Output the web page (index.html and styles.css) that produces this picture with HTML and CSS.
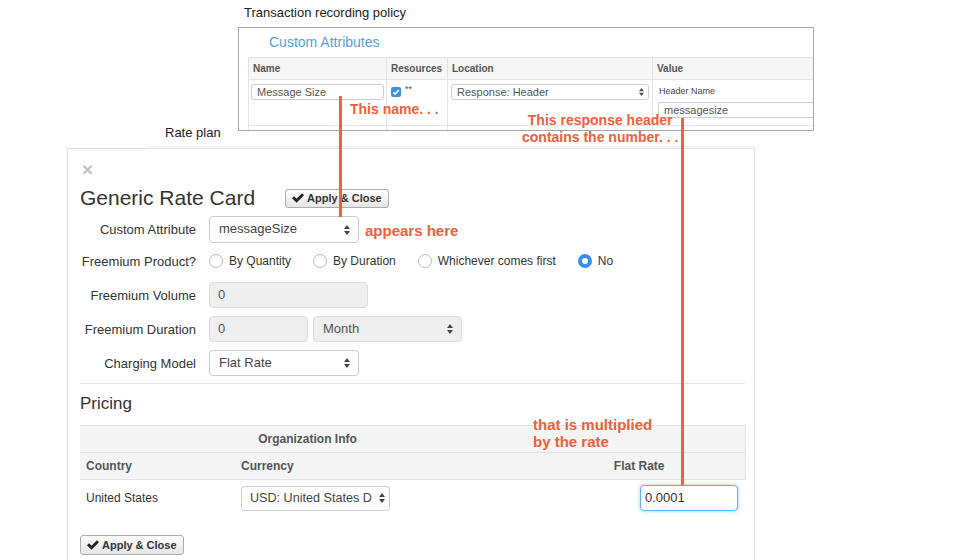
FILE: index.html
```html
<!DOCTYPE html>
<html lang="en">
<head>
<meta charset="utf-8">
<title>Generic Rate Card</title>
<link rel="stylesheet" href="styles.css">
</head>
<body>
<div class="canvas">
  <section class="policy">
    <h2 class="policy-title">Transaction recording policy</h2>
    <div class="attr-box">
      <h3 class="attr-title">Custom Attributes</h3>
      <table class="attr-table">
        <colgroup><col class="w-name"><col class="w-res"><col class="w-loc"><col class="w-val"></colgroup>
        <thead>
          <tr><th>Name</th><th>Resources</th><th>Location</th><th>Value</th></tr>
        </thead>
        <tbody>
          <tr>
            <td><div class="mini-input">Message Size</div></td>
            <td><span class="cbx"><svg width="10" height="10" viewBox="0 0 10 10"><path d="M2.3 5.2 L4.2 7.1 L7.8 3" fill="none" stroke="#fff" stroke-width="1.5"/></svg></span><span class="stars">**</span></td>
            <td><div class="mini-input sel">Response: Header<span class="arrows small"><svg width="5" height="8" viewBox="0 0 5 8"><path d="M0 3.3 L2.5 0 L5 3.3 Z M0 4.7 L2.5 8 L5 4.7 Z" fill="#555"/></svg></span></div></td>
            <td><div class="hdr-name">Header Name</div><div class="mini-input val">messagesize</div></td>
          </tr>
          <tr>
            <td><div class="mini-input"></div></td>
            <td></td>
            <td><div class="mini-input sel"></div></td>
            <td></td>
          </tr>
        </tbody>
      </table>
    </div>
  </section>

  <div class="rateplan">Rate plan</div>
  <div class="bg-strip"></div>

  <div class="modal">
    <div class="close">&times;</div>
    <div class="title-row">
      <h1 class="modal-title">Generic Rate Card</h1>
      <button class="btn"><svg class="chk" width="12" height="10" viewBox="0 0 12 10"><path d="M0 5.2 L2 3.2 L4.6 5.7 L10 0.3 L12 2.3 L4.6 9.7 Z" fill="#222"/></svg>Apply &amp; Close</button>
    </div>

    <div class="form">
      <div class="frow">
        <label class="flabel">Custom Attribute</label>
        <div class="select w150">messageSize<span class="arrows"><svg width="6" height="10" viewBox="0 0 6 10"><path d="M0 4 L3 0 L6 4 Z M0 6 L3 10 L6 6 Z" fill="#444"/></svg></span></div>
      </div>
      <div class="frow radios">
        <label class="flabel">Freemium Product?</label>
        <div class="radio-group">
          <span class="radio"></span><span class="rlabel">By Quantity</span>
          <span class="radio"></span><span class="rlabel">By Duration</span>
          <span class="radio"></span><span class="rlabel">Whichever comes first</span>
          <span class="radio on"></span><span class="rlabel">No</span>
        </div>
      </div>
      <div class="frow">
        <label class="flabel">Freemium Volume</label>
        <div class="input disabled w159">0</div>
      </div>
      <div class="frow">
        <label class="flabel">Freemium Duration</label>
        <div class="input disabled w99">0</div>
        <div class="select disabled w149 ml5">Month<span class="arrows"><svg width="6" height="10" viewBox="0 0 6 10"><path d="M0 4 L3 0 L6 4 Z M0 6 L3 10 L6 6 Z" fill="#444"/></svg></span></div>
      </div>
      <div class="frow">
        <label class="flabel">Charging Model</label>
        <div class="select w150">Flat Rate<span class="arrows"><svg width="6" height="10" viewBox="0 0 6 10"><path d="M0 4 L3 0 L6 4 Z M0 6 L3 10 L6 6 Z" fill="#444"/></svg></span></div>
      </div>
    </div>

    <hr class="divider">
    <h2 class="pricing">Pricing</h2>

    <table class="price-table">
      <colgroup><col class="p1"><col class="p2"><col class="p3"></colgroup>
      <thead>
        <tr><th colspan="2" class="center">Organization Info</th><th></th></tr>
        <tr><th>Country</th><th>Currency</th><th class="right">Flat Rate</th></tr>
      </thead>
      <tbody>
        <tr>
          <td>United States</td>
          <td><div class="select w149 cur">USD: United States D<span class="arrows tight"><svg width="6" height="10" viewBox="0 0 6 10"><path d="M0 4 L3 0 L6 4 Z M0 6 L3 10 L6 6 Z" fill="#444"/></svg></span></div></td>
          <td class="rate-cell"><div class="input focus">0.0001</div></td>
        </tr>
      </tbody>
    </table>

    <button class="btn bottom"><svg class="chk" width="12" height="10" viewBox="0 0 12 10"><path d="M0 5.2 L2 3.2 L4.6 5.7 L10 0.3 L12 2.3 L4.6 9.7 Z" fill="#222"/></svg>Apply &amp; Close</button>
  </div>

  <div class="line l1"></div>
  <div class="line l2"></div>
  <div class="note n1">This name. . .</div>
  <div class="note n2">This response header<br>contains the number. . .</div>
  <div class="note n3">appears here</div>
  <div class="note n4">that is multiplied<br>by the rate</div>
</div>
</body>
</html>
```

FILE: styles.css
```css
* { box-sizing: border-box; }
html, body { margin: 0; padding: 0; background: #fff; }
body { font-family: "Liberation Sans", Arial, sans-serif; color: #333; }

.canvas { position: relative; width: 960px; height: 560px; overflow: hidden; }

/* ---- top policy snippet ---- */
.policy-title { margin: 0; padding: 5px 0 0 244px; font-size: 13px; line-height: 16px; font-weight: normal; color: #222; }
.attr-box { margin: 6px 0 0 238px; width: 576px; height: 104px; border: 1px solid #a9a9a9; overflow: hidden; }
.attr-title { margin: 0; padding: 5px 0 0 30px; font-size: 14px; line-height: 18px; font-weight: normal; color: #5a9fd8; }
.attr-table { margin: 6px 0 0 9px; border-collapse: collapse; table-layout: fixed; width: 604px; }
.w-name { width: 138px; } .w-res { width: 61px; } .w-loc { width: 205px; } .w-val { width: 200px; }
.attr-table th { height: 22px; background: #f6f6f6; border: 1px solid #e3e3e3; font-size: 10px; font-weight: bold; color: #555; text-align: left; padding: 0 4px; }
.attr-table td { border: 1px solid #e6e6e6; vertical-align: top; padding: 4px 2px 0; height: 46px; font-size: 11px; }
.mini-input { position: relative; height: 16px; border: 1px solid #cfcfcf; border-radius: 3px; font-size: 11px; line-height: 14px; padding: 0 5px; color: #555; background: #fff; }
.mini-input.sel { margin-left: 1px; width: 198px; }
.mini-input.val { margin: 5px 0 0 3px; width: 200px; border-radius: 2px; }
.hdr-name { font-size: 9px; line-height: 12px; margin: 1px 0 0 4px; color: #444; }
.cbx { display: inline-block; vertical-align: top; margin: 3px 0 0 2px; width: 10px; height: 10px; border-radius: 2px; background: #3d8fe6; }
.cbx svg { display: block; }
.stars { font-size: 9px; margin-left: 4px; color: #555; vertical-align: top; line-height: 10px; }
.arrows { position: absolute; right: 8px; top: 50%; transform: translateY(-50%); display: flex; }
.arrows.small { right: 4px; }
.arrows.tight { right: 4px; }

.rateplan { margin-top: -6px; padding-left: 165px; font-size: 13px; line-height: 16px; color: #222; }
.bg-strip { margin: 0 0 1px 150px; width: 605px; height: 6px; border-bottom: 1px solid #ececec; }

/* ---- modal ---- */
.modal { margin-left: 67px; width: 688px; height: 420px; border: 1px solid #e2e2e2; border-bottom: none; padding: 0 9px 0 12px; background: #fff; box-shadow: 0 0 3px rgba(0,0,0,0.04); }
.close { margin-top: 13px; padding-left: 2px; font-size: 19px; line-height: 16px; font-weight: bold; color: #c2c2c2; }
.title-row { display: flex; align-items: center; margin-top: 7px; height: 26px; }
.modal-title { margin: 0; font-size: 21px; line-height: 26px; font-weight: normal; color: #333; }
.btn { display: inline-flex; align-items: center; gap: 3px; height: 19px; padding: 0 6px 0 6px; border: 1px solid #adadad; border-radius: 3px; background: linear-gradient(#ffffff, #e6e6e6); font-family: "Liberation Sans", Arial, sans-serif; font-size: 11px; font-weight: bold; color: #333; }
.title-row .btn { margin-left: 30px; width: 104px; }
.chk { display: block; }

.form { display: flex; flex-direction: column; gap: 8px; margin-top: 5px; }
.frow { display: flex; align-items: center; }
.frow.radios { height: 20px; margin-bottom: 3px; }
.flabel { width: 116px; margin-right: 13px; text-align: right; font-size: 13px; color: #333; }
.select, .input { position: relative; height: 26px; border: 1px solid #ccc; border-radius: 4px; font-size: 13px; line-height: 24px; padding: 0 9px; color: #444; background: #fff; white-space: nowrap; overflow: hidden; }
.w150 { width: 150px; } .w149 { width: 149px; } .w159 { width: 159px; } .w99 { width: 99px; }
.ml5 { margin-left: 5px; }
.disabled { background: #eee; border-color: #ddd; color: #555; }
.input { padding: 0 8px; }
.form .frow:first-child .select { height: 27px; }
.radio-group { display: flex; align-items: center; font-size: 12px; color: #333; }
.radio { width: 14px; height: 14px; border: 1px solid #bdbdbd; border-radius: 50%; background: #fff; margin-right: 6px; }
.radio.on { border: 4.5px solid #3b8ff0; background: #fff; }
.rlabel { margin-right: 22px; }

.divider { margin: 7px 0 0 0; border: 0; border-top: 1px solid #e6e6e6; height: 0; }
.pricing { margin: 10px 0 0 0; font-size: 17px; line-height: 20px; font-weight: normal; color: #333; }

.price-table { margin-top: 11px; width: 665px; border-collapse: collapse; table-layout: fixed; }
.p1 { width: 155px; } .p2 { width: 300px; } .p3 { width: 210px; }
.price-table th { height: 27px; background: #f5f5f5; border-top: 1px solid #e3e3e3; border-bottom: 1px solid #e3e3e3; font-size: 12px; font-weight: bold; color: #555; text-align: left; padding: 0 6px; }
.price-table thead tr th:last-child { border-right: 1px solid #e3e3e3; }
.price-table th.center { text-align: center; }
.price-table th.right { text-align: right; padding-right: 80px; }
.price-table td { padding: 5px 6px 6px; font-size: 12px; color: #333; vertical-align: middle; }
.price-table td .select { height: 25px; line-height: 23px; }
.select.cur { padding: 0 12px 0 8px; font-size: 12.6px; }
.rate-cell { padding-left: 105px !important; }
.input.focus { width: 98px; height: 26px; border: 1px solid #66afe9; box-shadow: 0 0 4px rgba(102,175,233,0.6); color: #333; padding: 0 4px; }
.btn.bottom { margin-top: 18px; width: 104px; height: 20px; }

/* ---- annotations ---- */
.line { position: absolute; width: 3px; background: #f0633a; }
.l1 { left: 339px; top: 96px; height: 121px; }
.l2 { left: 681px; top: 118px; height: 367px; }
.note { position: absolute; color: #f0603a; font-weight: bold; }
.n1 { left: 350px; top: 101px; font-size: 14px; line-height: 17px; }
.n2 { left: 522px; top: 112px; text-align: center; font-size: 14px; line-height: 17px; }
.n3 { left: 365px; top: 222px; font-size: 15px; line-height: 18px; }
.n4 { left: 533px; top: 416px; font-size: 15px; line-height: 17px; }
```
